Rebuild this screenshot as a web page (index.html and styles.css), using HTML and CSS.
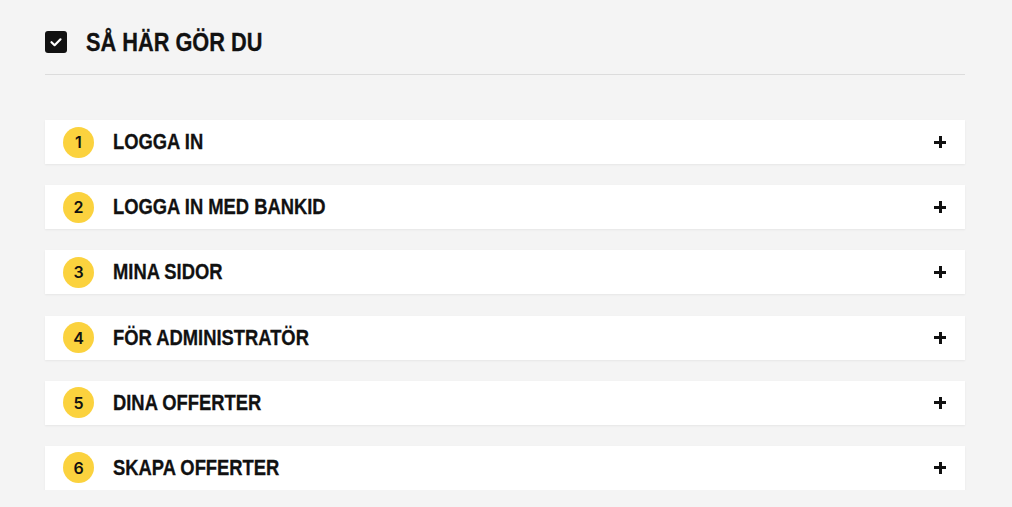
FILE: index.html
```html
<!DOCTYPE html>
<html lang="sv">
<head>
<meta charset="utf-8">
<link rel="stylesheet" href="styles.css">
</head>
<body>
<div class="wrap">
  <div class="head">
    <span class="check"><svg width="22" height="22" viewBox="0 0 22 22"><rect x="0" y="0" width="22" height="22" rx="3" fill="#111"/><path d="M6.5 11.2 L9.6 14.2 L15.5 8.3" fill="none" stroke="#fff" stroke-width="2.2" stroke-linecap="round" stroke-linejoin="round"/></svg></span>
    <h2 class="title"><span class="narrow">SÅ HÄR GÖR DU</span></h2>
  </div>
  <div class="list">
    <div class="row"><span class="badge">1</span><span class="label"><span class="narrow">LOGGA IN</span></span><span class="plus"></span></div>
    <div class="row"><span class="badge">2</span><span class="label"><span class="narrow">LOGGA IN MED BANKID</span></span><span class="plus"></span></div>
    <div class="row"><span class="badge">3</span><span class="label"><span class="narrow">MINA SIDOR</span></span><span class="plus"></span></div>
    <div class="row"><span class="badge">4</span><span class="label"><span class="narrow">FÖR ADMINISTRATÖR</span></span><span class="plus"></span></div>
    <div class="row"><span class="badge">5</span><span class="label"><span class="narrow">DINA OFFERTER</span></span><span class="plus"></span></div>
    <div class="row"><span class="badge">6</span><span class="label"><span class="narrow">SKAPA OFFERTER</span></span><span class="plus"></span></div>
  </div>
</div>
</body>
</html>
```
FILE: styles.css
```css
html, body { margin: 0; padding: 0; }
body { background: #f4f4f4; font-family: "Liberation Sans", Arial, sans-serif; color: #111; }
.wrap { width: 920px; margin-left: 45px; padding-top: 31px; }
.head { display: flex; align-items: center; height: 22px; padding-bottom: 21px; border-bottom: 1px solid #dcdcdc; }
.check { display: block; width: 22px; height: 22px; }
.check svg { display: block; }
.title { margin: 0 0 0 19px; font-size: 25px; font-weight: bold; line-height: 22px; white-space: nowrap; }
.narrow { display: inline-block; transform: scaleX(0.87); transform-origin: left center; white-space: nowrap; -webkit-text-stroke: 0.3px #111; }
.list { display: flex; flex-direction: column; gap: 21.2px; padding-top: 45px; }
.row { display: flex; align-items: center; height: 44px; background: #fff; box-shadow: 0 1px 2px rgba(0,0,0,0.06); padding: 0 18px; }
.badge { width: 31px; height: 31px; border-radius: 50%; background: #fbd23e; display: flex; align-items: center; justify-content: center; font-family: Inter, "Liberation Sans", sans-serif; font-size: 16px; font-weight: 600; color: #111; }
.label { margin-left: 19px; font-size: 22px; font-weight: bold; flex: 1; line-height: 44px; }
.label .narrow { transform: scaleX(0.835); }
.plus { position: relative; width: 12px; height: 12px; margin-right: 1px; }
.plus::before, .plus::after { content: ""; position: absolute; background: #111; }
.plus::before { left: 0; top: 4.5px; width: 12px; height: 3px; }
.plus::after { top: 0; left: 4.5px; width: 3px; height: 12px; }
```
